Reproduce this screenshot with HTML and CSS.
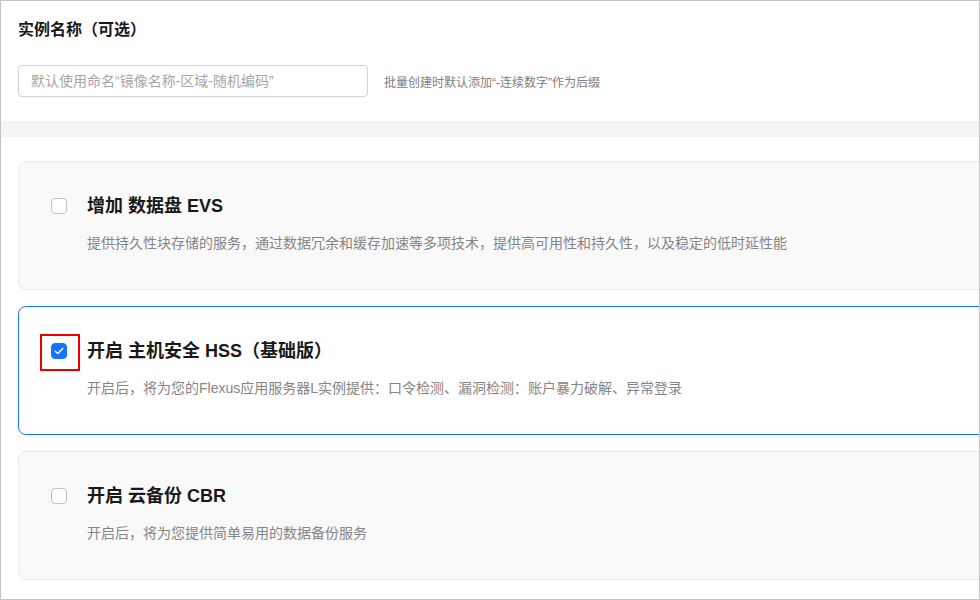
FILE: index.html
```html
<!DOCTYPE html>
<html lang="zh-CN">

<head>
    <meta charset="UTF-8"/>
    <meta name="viewport" content="width=device-width, initial-scale=1.0"/>
    <title>实例配置</title>
    <link rel="stylesheet" href="styles.css">
</head>

<body>
<div class="frame">
    <div class="name-section">
        <h3 class="section-title">实例名称（可选）</h3>
        <div class="name-row">
            <input class="name-input" type="text" placeholder="默认使用命名“镜像名称-区域-随机编码”"/>
            <span class="name-hint">批量创建时默认添加“-连续数字”作为后缀</span>
        </div>
    </div>
    <div class="divider"></div>
    <div class="options">
        <div class="option-card">
            <span class="checkbox"></span>
            <div class="option-body">
                <div class="option-title">增加 数据盘 EVS</div>
                <p class="option-desc">提供持久性块存储的服务，通过数据冗余和缓存加速等多项技术，提供高可用性和持久性，以及稳定的低时延性能</p>
            </div>
        </div>
        <div class="option-card checked">
            <span class="checkbox marked">
                <svg width="10" height="8" viewBox="0 0 10 8">
                    <path d="M1.2 4.2 L3.8 6.6 L8.8 1.4" fill="none" stroke="#fff" stroke-width="1.4" stroke-linecap="round" stroke-linejoin="round"/>
                </svg>
            </span>
            <div class="option-body">
                <div class="option-title">开启 主机安全 HSS（基础版）</div>
                <p class="option-desc">开启后，将为您的Flexus应用服务器L实例提供：口令检测、漏洞检测：账户暴力破解、异常登录</p>
            </div>
        </div>
        <div class="option-card">
            <span class="checkbox"></span>
            <div class="option-body">
                <div class="option-title">开启 云备份 CBR</div>
                <p class="option-desc">开启后，将为您提供简单易用的数据备份服务</p>
            </div>
        </div>
    </div>
</div>
</body>
</html>
```

FILE: styles.css
```css
* {
    box-sizing: border-box;
}

body {
    margin: 0;
    font-family: "Liberation Sans", "Noto Sans CJK SC", sans-serif;
    color: #191919;
}

.frame {
    width: 980px;
    height: 600px;
    border: 1px solid #c4c4c4;
    overflow: hidden;
    background: #fff;
}

.name-section {
    padding: 17px 17px 24px 17px;
}

.section-title {
    margin: 0;
    font-size: 16px;
    line-height: 24px;
    font-weight: bold;
}

.name-row {
    margin-top: 23px;
    display: flex;
    align-items: center;
}

.name-input {
    width: 350px;
    height: 32px;
    border: 1px solid #d3d3d3;
    border-radius: 4px;
    padding: 0 12px;
    font-family: inherit;
    font-size: 14px;
    outline: none;
}

.name-input::placeholder {
    color: #a6a6a6;
}

.name-hint {
    margin-left: 16px;
    font-size: 12px;
    color: #808080;
}

.divider {
    height: 16px;
    background: #f4f4f4;
}

.options {
    padding: 24px 0 0 17px;
    margin-right: -60px;
    display: flex;
    flex-direction: column;
    gap: 16px;
}

.option-card {
    height: 129px;
    border: 1px solid #ebebeb;
    border-radius: 8px;
    background: #f9f9f9;
    padding: 32px 32px 0 32px;
    display: flex;
    align-items: flex-start;
}

.option-card.checked {
    background: #fff;
    border-color: #1476ff;
    box-shadow: 0 2px 6px rgba(0, 0, 0, 0.04);
}

.checkbox {
    width: 16px;
    height: 16px;
    margin-top: 4px;
    margin-right: 20px;
    border: 1px solid #c2c2c2;
    border-radius: 4px;
    background: #fff;
    flex-shrink: 0;
    position: relative;
    display: flex;
    align-items: center;
    justify-content: center;
}

.checkbox.marked {
    background: #1476ff;
    border-color: #1476ff;
}

/* 红色标注框 */
.checkbox.marked::after {
    content: "";
    position: absolute;
    left: -12px;
    top: -10px;
    width: 36px;
    height: 33px;
    border: 2px solid #e60000;
}

.option-title {
    font-size: 18px;
    line-height: 24px;
    font-weight: bold;
}

.option-desc {
    margin: 14px 0 0 0;
    font-size: 14px;
    line-height: 22px;
    color: #858585;
}
```
